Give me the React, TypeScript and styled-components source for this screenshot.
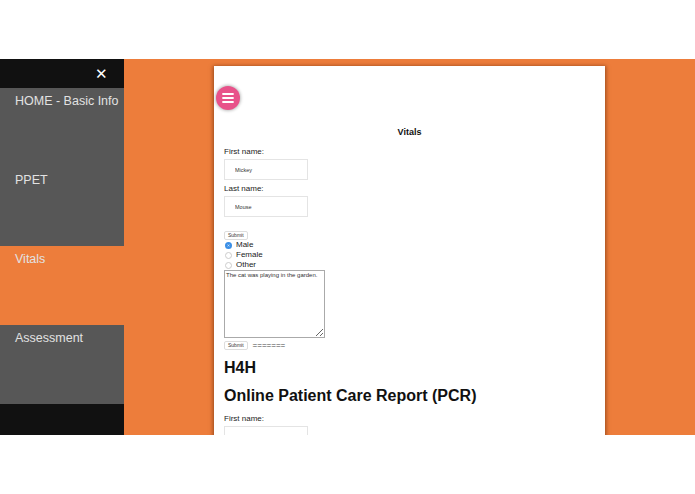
import React from 'react';
import styled, { createGlobalStyle } from 'styled-components';

const GlobalStyle = createGlobalStyle`
	html, body {
		margin: 0;
		padding: 0;
		background: #ffffff;
		font-family: 'Liberation Sans', Arial, sans-serif;
	}
`;

const Page = styled.div`
	width: 695px;
	height: 494px;
	padding-top: 59px;
	box-sizing: border-box;
`;

const Frame = styled.div`
	display: flex;
	height: 376px;
	background: #ed7d3b;
	overflow: hidden;
`;

const Sidebar = styled.nav`
	width: 124px;
	flex-shrink: 0;
	display: flex;
	flex-direction: column;
	background: #111111;
`;

const SidebarHeader = styled.div`
	height: 29px;
	display: flex;
	align-items: center;
	justify-content: flex-end;
	padding-right: 16px;
	color: #ffffff;
	font-size: 15px;
`;

const NavItem = styled.a<{ $active?: boolean }>`
	display: block;
	height: 79px;
	box-sizing: border-box;
	padding: 5px 0 0 15px;
	background: ${(p) => (p.$active ? '#ed7d3b' : '#575757')};
	color: #e2e2e2;
	font-size: 12.5px;
	line-height: 16px;
	text-decoration: none;
`;

const Main = styled.div`
	flex: 1;
	padding: 7px 0 0 90px;
`;

const Card = styled.div`
	width: 391px;
	height: 400px;
	background: #ffffff;
	box-shadow: 0 1px 4px 1px rgba(80, 30, 0, 0.55);
	padding: 20px 0 0 10px;
	box-sizing: border-box;
	color: #111111;
	font-size: 8px;
`;

const MenuButton = styled.button`
	display: flex;
	align-items: center;
	justify-content: center;
	width: 24px;
	height: 24px;
	margin-left: -8px;
	border: none;
	border-radius: 50%;
	background: #e8528a;
	box-shadow: 0 0 3px 1px rgba(0, 0, 0, 0.25);
	padding: 0;
`;

const Title = styled.h3`
	margin: 17px 0 0 -10px;
	text-align: center;
	font-size: 9px;
	line-height: 11px;
	font-weight: bold;
`;

const Label = styled.div<{ $top?: number }>`
	margin-top: ${(p) => p.$top ?? 0}px;
	font-size: 8px;
	line-height: 10px;
	color: #222222;
`;

const TextInput = styled.input`
	display: block;
	width: 84px;
	height: 21px;
	margin-top: 2px;
	box-sizing: border-box;
	border: 1px solid #e4e4e4;
	padding: 0 0 0 10px;
	font-family: inherit;
	font-size: 5.5px;
	color: #333333;
	outline: none;
`;

const SmallButton = styled.button<{ $top?: number }>`
	display: block;
	height: 9px;
	margin-top: ${(p) => p.$top ?? 0}px;
	padding: 0 3px;
	border: 1px solid #dddddd;
	border-radius: 2px;
	background: #ffffff;
	font-family: inherit;
	font-size: 5px;
	line-height: 7px;
	color: #333333;
`;

const RadioRow = styled.label`
	display: flex;
	align-items: center;
	gap: 4px;
	height: 10px;
	font-size: 8px;
	line-height: 10px;
	color: #1a1a1a;
`;

const Radio = styled.input`
	appearance: none;
	width: 7px;
	height: 7px;
	margin: 0 0 0 1px;
	border: 1px solid #cccccc;
	border-radius: 50%;
	box-sizing: border-box;
	background: #ffffff;

	&:checked {
		border: 2px solid #3b8fe6;
		background: #ffffff;
		box-shadow: inset 0 0 0 1px #3b8fe6;
	}
`;

const Notes = styled.textarea`
	display: block;
	width: 101px;
	height: 68px;
	margin: 0;
	box-sizing: border-box;
	border: 1px solid #aaaaaa;
	padding: 1px;
	font-family: inherit;
	font-size: 6px;
	color: #333333;
	resize: both;
`;

const SubmitRow = styled.div`
	display: flex;
	align-items: center;
	gap: 5px;
	margin-top: 3px;
	height: 9px;
	font-size: 8px;
	color: #444444;
`;

const Heading = styled.h1<{ $top: number }>`
	margin: ${(p) => p.$top}px 0 0;
	font-size: 16px;
	line-height: 20px;
	font-weight: bold;
	color: #111111;
`;

const Hamburger = () => (
	<svg width="14" height="12" viewBox="0 0 14 12">
		<g stroke="#ffffff" strokeWidth="1.8" strokeLinecap="round">
			<line x1="2" y1="2" x2="12" y2="2" />
			<line x1="2" y1="6" x2="12" y2="6" />
			<line x1="2" y1="10" x2="12" y2="10" />
		</g>
	</svg>
);

const navItems = [
	{ label: 'HOME - Basic Info', active: false },
	{ label: 'PPET', active: false },
	{ label: 'Vitals', active: true },
	{ label: 'Assessment', active: false },
];

export default function App() {
	return (
		<Page>
			<GlobalStyle />
			<Frame>
				<Sidebar>
					<SidebarHeader>✕</SidebarHeader>
					{navItems.map((item) => (
						<NavItem key={item.label} href="#" $active={item.active}>
							{item.label}
						</NavItem>
					))}
				</Sidebar>
				<Main>
					<Card>
						<MenuButton>
							<Hamburger />
						</MenuButton>
						<Title>Vitals</Title>
						<Label $top={9}>First name:</Label>
						<TextInput defaultValue="Mickey" />
						<Label $top={4}>Last name:</Label>
						<TextInput defaultValue="Mouse" />
						<SmallButton $top={14}>Submit</SmallButton>
						<RadioRow>
							<Radio type="radio" name="gender" defaultChecked />
							Male
						</RadioRow>
						<RadioRow>
							<Radio type="radio" name="gender" />
							Female
						</RadioRow>
						<RadioRow>
							<Radio type="radio" name="gender" />
							Other
						</RadioRow>
						<Notes defaultValue="The cat was playing in the garden." />
						<SubmitRow>
							<SmallButton>Submit</SmallButton>
							=======
						</SubmitRow>
						<Heading $top={8}>H4H</Heading>
						<Heading $top={8}>Online Patient Care Report (PCR)</Heading>
						<Label $top={8}>First name:</Label>
						<TextInput defaultValue="Mickey" />
					</Card>
				</Main>
			</Frame>
		</Page>
	);
}
